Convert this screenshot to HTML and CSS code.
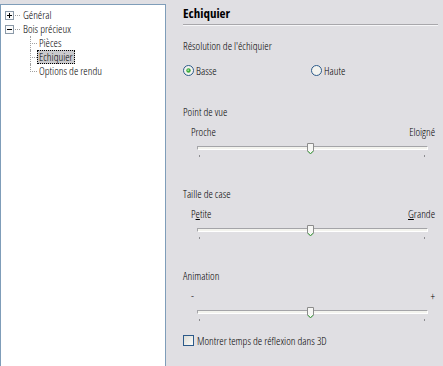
FILE: index.html
```html
<!DOCTYPE html>
<html lang="fr">
<head>
    <meta charset="UTF-8">
    <title>Options - Echiquier</title>
    <link rel="stylesheet" href="styles.css">
</head>
<body>
    <div class="dialog">
        <div class="tree">
            <div class="tree-row">
                <span class="toggle"><svg width="9" height="9" viewBox="0 0 9 9"><rect x="0.5" y="0.5" width="8" height="8" fill="#fbfbfb" stroke="#8a99a8"/><path d="M2 4.5h5M4.5 2v5" stroke="#000"/></svg></span>
                <span class="stub"></span>
                <span class="label">Général</span>
            </div>
            <div class="tree-row">
                <span class="toggle"><svg width="9" height="9" viewBox="0 0 9 9"><rect x="0.5" y="0.5" width="8" height="8" fill="#fbfbfb" stroke="#8a99a8"/><path d="M2 4.5h5" stroke="#000"/></svg></span>
                <span class="stub"></span>
                <span class="label">Bois précieux</span>
            </div>
            <div class="tree-row child">
                <span class="branch"></span>
                <span class="label">Pièces</span>
            </div>
            <div class="tree-row child">
                <span class="branch"></span>
                <span class="label selected">Echiquier</span>
            </div>
            <div class="tree-row child last">
                <span class="branch"></span>
                <span class="label">Options de rendu</span>
            </div>
        </div>

        <div class="page">
            <div class="page-title">Echiquier</div>

            <div class="field-label first">Résolution de l'échiquier</div>
            <div class="radio-row">
                <label class="radio">
                    <svg width="11" height="11" viewBox="0 0 11 11"><circle cx="5.5" cy="5.5" r="5" fill="#f3f3ef" stroke="#2c5a8a"/><circle cx="5.5" cy="5.5" r="2.2" fill="#3daa3d"/><circle cx="5.2" cy="5.2" r="0.9" fill="#9be29b"/></svg>
                    Basse
                </label>
                <label class="radio">
                    <svg width="11" height="11" viewBox="0 0 11 11"><circle cx="5.5" cy="5.5" r="5" fill="#f3f3ef" stroke="#2c5a8a"/></svg>
                    Haute
                </label>
            </div>

            <div class="group">
                <div class="field-label">Point de vue</div>
                <div class="scale">
                    <span>Proche</span>
                    <span>Eloigné</span>
                </div>
                <div class="slider">
                    <div class="track"></div>
                    <svg class="thumb" width="8" height="12" viewBox="0 0 8 12"><path d="M0.5 0.5h6v7.5l-3 3l-3-3z" fill="#f6f6f4" stroke="#8c8c8c"/><path d="M1 8.2l2.5 2.5l2.5-2.5" fill="none" stroke="#3fae3f"/></svg>
                    <div class="ticks"><span></span><span></span></div>
                </div>
            </div>

            <div class="group">
                <div class="field-label">Taille de case</div>
                <div class="scale">
                    <span>P<u>e</u>tite</span>
                    <span><u>G</u>rande</span>
                </div>
                <div class="slider">
                    <div class="track"></div>
                    <svg class="thumb" width="8" height="12" viewBox="0 0 8 12"><path d="M0.5 0.5h6v7.5l-3 3l-3-3z" fill="#f6f6f4" stroke="#8c8c8c"/><path d="M1 8.2l2.5 2.5l2.5-2.5" fill="none" stroke="#3fae3f"/></svg>
                    <div class="ticks"><span></span><span></span></div>
                </div>
            </div>

            <div class="group">
                <div class="field-label">Animation</div>
                <div class="scale">
                    <span>-</span>
                    <span>+</span>
                </div>
                <div class="slider">
                    <div class="track"></div>
                    <svg class="thumb" width="8" height="12" viewBox="0 0 8 12"><path d="M0.5 0.5h6v7.5l-3 3l-3-3z" fill="#f6f6f4" stroke="#8c8c8c"/><path d="M1 8.2l2.5 2.5l2.5-2.5" fill="none" stroke="#3fae3f"/></svg>
                    <div class="ticks"><span></span><span></span></div>
                </div>
            </div>

            <label class="check">
                <span class="box"></span>
                Montrer temps de réflexion dans 3D
            </label>
        </div>
    </div>
</body>
</html>
```

FILE: styles.css
```css
body {
    margin: 0;
    background-color: #e0dfe3;
    font-family: 'Open Sans', 'Liberation Sans', Arial, sans-serif;
    font-stretch: 75%;
    font-weight: 350;
    font-size: 11px;
    color: #000;
}

.dialog {
    display: flex;
    height: 366px;
    overflow: hidden;
}

/* left tree */
.tree {
    width: 168px;
    margin-top: 4px;
    padding-top: 3px;
    background-color: #fff;
    border: 1px solid #7f9db9;
    border-bottom: none;
}

.tree-row {
    display: flex;
    align-items: center;
    height: 14px;
    line-height: 14px;
}

.toggle {
    display: flex;
    margin-left: 4px;
}

.stub {
    width: 5px;
    height: 1px;
    margin-left: 1px;
    background-image: linear-gradient(to right, #a0a0a0 50%, transparent 50%);
    background-size: 2px 1px;
}

.tree-row .label {
    margin-left: 1px;
    padding: 0 1px;
    border: 1px dotted transparent;
    line-height: 12px;
}

.tree-row.child .label {
    margin-left: 0;
}

.branch {
    align-self: stretch;
    width: 6px;
    margin-left: 29px;
    border-left: 1px dotted #a0a0a0;
    background-image: linear-gradient(to right, #a0a0a0 50%, transparent 50%);
    background-size: 2px 1px;
    background-repeat: repeat-x;
    background-position: 1px 7px;
}

.tree-row.last .branch {
    align-self: flex-start;
    height: 8px;
}

.tree-row .label.selected {
    background-color: #cacacd;
    border-color: #000;
}

/* right page */
.page {
    flex: 1;
    padding: 6px 5px 0 17px;
}

.page-title {
    font-weight: bold;
    font-size: 13px;
    line-height: 14px;
    padding-bottom: 4px;
    border-bottom: 1px solid #a8a7ab;
    box-shadow: 0 1px 0 #f6f6f8;
}

.field-label {
    line-height: 14px;
}

.field-label.first {
    margin-top: 14px;
}

.radio-row {
    display: flex;
    margin-top: 10px;
    height: 14px;
}

.radio {
    display: flex;
    align-items: center;
    gap: 2px;
    width: 127px;
}

.radio + .radio {
    margin-left: 1px;
}

.group {
    margin-top: 28px;
}

.group + .group {
    margin-top: 26px;
}

.scale {
    display: flex;
    justify-content: space-between;
    margin-top: 6px;
    padding: 0 3px 0 8px;
    line-height: 14px;
}

.slider {
    position: relative;
    height: 22px;
    margin: 0 10px 0 14px;
}

.track {
    position: relative;
    top: 7px;
    height: 2px;
    background-color: #f3f3ee;
    border-top: 1px solid #a4a4a8;
    border-left: 1px solid #a4a4a8;
    border-bottom: 1px solid #fff;
    border-right: 1px solid #fff;
}

.thumb {
    position: absolute;
    left: 110px;
    top: 4px;
}

.ticks {
    display: flex;
    justify-content: space-between;
    margin-top: 12px;
    padding: 0 3px 0 2px;
}

.ticks span {
    width: 1px;
    height: 2px;
    background-color: #8c8c90;
}

.check {
    display: flex;
    align-items: center;
    gap: 3px;
    margin-top: 8px;
    height: 14px;
}

.check .box {
    width: 9px;
    height: 9px;
    border: 1px solid #2c5a8a;
    background: linear-gradient(135deg, #dcdcd6, #fbfbf9);
}
```
